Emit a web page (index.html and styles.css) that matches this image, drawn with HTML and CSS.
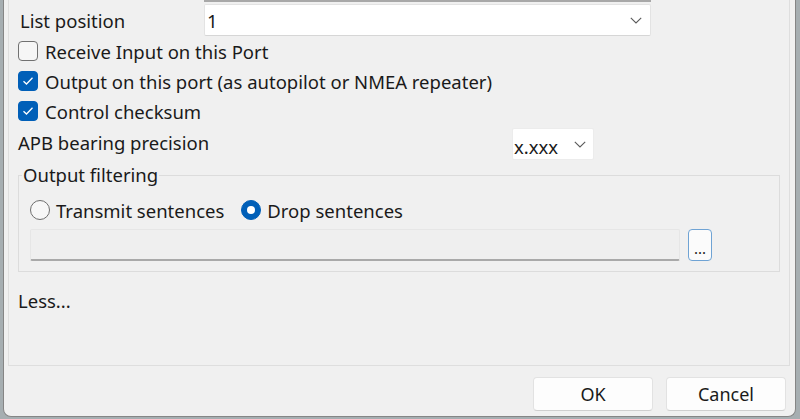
FILE: index.html
```html
<!DOCTYPE html>
<html>
<head>
<meta charset="utf-8">
<link rel="stylesheet" href="styles.css">
</head>
<body>
<div class="window">
  <div class="panel">
    <div class="prev-edge"></div>
    <div class="row row-list">
      <span class="lbl lbl-list">List position</span>
      <div class="combo combo-wide">
        <span class="combo-text">1</span>
        <svg class="chev" width="12" height="7" viewBox="0 0 12 7"><path d="M0.8 0.8 L6 6 L11.2 0.8" fill="none" stroke="#5a5a5a" stroke-width="1.1"/></svg>
      </div>
    </div>
    <div class="check-row">
      <span class="cb"></span>
      <span class="txt">Receive Input on this Port</span>
    </div>
    <div class="check-row">
      <span class="cb on"><svg width="12" height="10" viewBox="0 0 12 10"><path d="M1.5 5.2 L4.5 8 L10.5 1.8" fill="none" stroke="#fff" stroke-width="1.3"/></svg></span>
      <span class="txt">Output on this port (as autopilot or NMEA repeater)</span>
    </div>
    <div class="check-row">
      <span class="cb on"><svg width="12" height="10" viewBox="0 0 12 10"><path d="M1.5 5.2 L4.5 8 L10.5 1.8" fill="none" stroke="#fff" stroke-width="1.3"/></svg></span>
      <span class="txt">Control checksum</span>
    </div>
    <div class="row row-apb">
      <span class="lbl lbl-apb">APB bearing precision</span>
      <div class="combo combo-small">
        <span class="combo-text small-text">x.xxx</span>
        <svg class="chev" width="12" height="7" viewBox="0 0 12 7"><path d="M0.8 0.8 L6 6 L11.2 0.8" fill="none" stroke="#5a5a5a" stroke-width="1.1"/></svg>
      </div>
    </div>
    <fieldset class="group">
      <legend>Output filtering</legend>
      <div class="radio-row">
        <span class="radio"></span>
        <span class="txt">Transmit sentences</span>
        <span class="radio on"><span class="dot"></span></span>
        <span class="txt">Drop sentences</span>
      </div>
      <div class="filter-row">
        <div class="field"></div>
        <div class="dots">...</div>
      </div>
    </fieldset>
    <div class="less">Less...</div>
  </div>
  <div class="buttons">
    <div class="btn">OK</div>
    <div class="btn">Cancel</div>
  </div>
</div>
</body>
</html>
```

FILE: styles.css
```css
* { box-sizing: border-box; }
html, body { margin: 0; padding: 0; }
body {
  width: 800px;
  height: 419px;
  overflow: hidden;
  background: #a6aeb1;
  font-family: "Noto Sans", "Open Sans", sans-serif;
  font-size: 18.5px;
  color: #1a1a1a;
  padding-left: 3px;
}
.window {
  width: 793px;
  height: 417px;
  background: #f0f0f0;
  border: 1px solid #858585;
  border-top: none;
  border-radius: 0 0 8px 8px;
}
.panel {
  margin-left: 4px;
  width: 782px;
  height: 366px;
  border: 1px solid #dedede;
  border-top: none;
}
.prev-edge {
  margin-left: 195px;
  width: 447px;
  height: 2px;
  background: #a8a8a8;
}
.row {
  display: flex;
  align-items: center;
}
.row-list {
  margin-top: 2px;
  height: 32px;
  padding-left: 11px;
}
.lbl-list { width: 184px; }
.combo {
  height: 32px;
  background: #fff;
  border: 1px solid #e3e3e3;
  border-bottom-color: #d6d6d6;
  border-radius: 2px;
  display: flex;
  align-items: center;
  justify-content: space-between;
}
.combo-wide {
  width: 447px;
  padding: 0 8px 0 2px;
}
.combo-text { line-height: 1; padding-top: 3px; }
.chev { display: block; margin-top: 1px; }
.check-row {
  height: 30px;
  display: flex;
  align-items: center;
  padding-left: 9px;
}
.cb {
  width: 20px;
  height: 20px;
  border: 1px solid #717171;
  border-radius: 4px;
  background: #f6f6f6;
  margin-right: 7px;
  display: flex;
  align-items: center;
  justify-content: center;
}
.cb.on {
  background: #005fb8;
  border-color: #005fb8;
}
.row-apb {
  height: 36px;
  padding-left: 9px;
  align-items: flex-start;
}
.lbl-apb {
  width: 494px;
  line-height: 34px;
}
.combo-small {
  margin-top: 2px;
  width: 82px;
  padding: 0 7px 0 1px;
  border-color: #ececec;
}
.small-text { padding-top: 6px; }
.group {
  margin: 2px 0 0 9px;
  width: 762px;
  padding: 0 0 10px 11px;
  border: 1px solid #dcdcdc;
  min-width: 0;
}
.group legend {
  margin-left: -8px;
  padding: 0 1px;
  line-height: 22px;
}
.radio-row {
  margin-top: 9px;
  height: 30px;
  display: flex;
  align-items: center;
}
.radio {
  width: 20px;
  height: 20px;
  border: 1px solid #6e6e6e;
  border-radius: 50%;
  background: #f7f7f7;
  margin-right: 6px;
  display: flex;
  align-items: center;
  justify-content: center;
}
.radio.on {
  background: #005fb8;
  border-color: #005fb8;
  margin-left: 17px;
}
.radio .dot {
  width: 8px;
  height: 8px;
  border-radius: 50%;
  background: #fff;
}
.filter-row {
  margin-top: 4px;
  display: flex;
  gap: 8px;
}
.field {
  width: 650px;
  height: 32px;
  background: #efefef;
  border: 1px solid #e6e6e6;
  border-bottom: 2px solid #a9a9a9;
  border-radius: 2px;
}
.dots {
  width: 24px;
  height: 32px;
  background: #fbfbfb;
  border: 1px solid #6fa3d4;
  border-radius: 4px;
  font-size: 15px;
  text-align: center;
  line-height: 36px;
}
.less {
  margin-top: 14px;
  height: 30px;
  line-height: 30px;
  padding-left: 9px;
}
.buttons {
  display: flex;
  justify-content: flex-end;
  gap: 13px;
  padding: 11px 9px 0 0;
}
.btn {
  width: 120px;
  height: 34px;
  background: #fdfdfd;
  border: 1px solid #e2e2e2;
  border-bottom-color: #cfcfcf;
  border-radius: 4px;
  text-align: center;
  line-height: 32px;
  font-size: 18px;
}
```
